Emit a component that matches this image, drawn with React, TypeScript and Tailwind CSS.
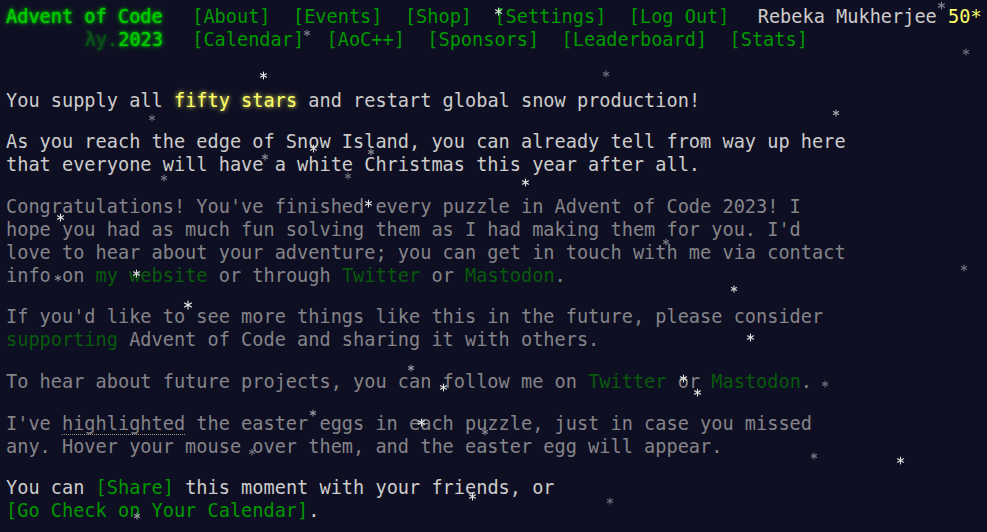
import React from "react";

type Star = [number, number, number, string];

const stars: Star[] = [
  [498, 11, 7, "#d8e8d8"],
  [307, 33, 6, "#7a7a86"],
  [263, 75, 7, "#e6e6e6"],
  [606, 74, 6, "#6e6e7a"],
  [941, 5, 7, "#8a8a94"],
  [966, 52, 6, "#6e6e7a"],
  [836, 113, 6, "#a8a8b0"],
  [152, 118, 6, "#6e6e7a"],
  [703, 142, 6, "#7a7a86"],
  [313, 148, 7, "#dcdcdc"],
  [371, 152, 6, "#8a8a94"],
  [265, 157, 6, "#8a8a94"],
  [348, 176, 6, "#6e6e7a"],
  [164, 178, 6, "#7a7a86"],
  [525, 182, 7, "#e6e6e6"],
  [368, 203, 7, "#e0e0e0"],
  [60, 217, 7, "#e6e6e6"],
  [58, 278, 6, "#8a8a94"],
  [136, 273, 7, "#e0e0e0"],
  [666, 242, 6, "#7a7a86"],
  [734, 289, 6, "#d0d0d0"],
  [964, 268, 6, "#6e6e7a"],
  [188, 305, 8, "#f2f2f2"],
  [750, 337, 7, "#e6e6e6"],
  [411, 368, 6, "#9a9aa4"],
  [443, 387, 7, "#e6e6e6"],
  [683, 378, 7, "#e6e6e6"],
  [697, 392, 7, "#e6e6e6"],
  [825, 384, 6, "#6e6e7a"],
  [313, 413, 6, "#9a9aa4"],
  [421, 422, 7, "#e6e6e6"],
  [485, 432, 6, "#8a8a94"],
  [252, 452, 6, "#6e6e7a"],
  [814, 456, 6, "#7a7a86"],
  [900, 460, 7, "#dcdcdc"],
  [472, 496, 7, "#e6e6e6"],
  [610, 501, 6, "#6e6e7a"],
  [137, 516, 6, "#9a9aa4"],
];

function Snow({ x, y, s, c }: { x: number; y: number; s: number; c: string }) {
  const r = s / 2;
  const dx = r * Math.cos(Math.PI / 6);
  const dy = r * Math.sin(Math.PI / 6);
  return (
    <svg
      className="absolute pointer-events-none"
      style={{ left: x - r - 1, top: y - r - 1 }}
      width={s + 2}
      height={s + 2}
      viewBox={`${-r - 1} ${-r - 1} ${s + 2} ${s + 2}`}
    >
      <g stroke={c} strokeWidth={1.1} strokeLinecap="round">
        <line x1={0} y1={-r} x2={0} y2={r} />
        <line x1={-dx} y1={-dy} x2={dx} y2={dy} />
        <line x1={-dx} y1={dy} x2={dx} y2={-dy} />
      </g>
    </svg>
  );
}

const navTop = ["[About]", "[Events]", "[Shop]", "[Settings]", "[Log Out]"];
const navBottom = ["[Calendar]", "[AoC++]", "[Sponsors]", "[Leaderboard]", "[Stats]"];

export default function App() {
  return (
    <div className="relative min-h-screen w-full overflow-hidden bg-[#0f0f23] text-[#cccccc] font-['DejaVu_Sans_Mono',monospace] text-[18.6px] leading-[23px]">
      <header className="pl-[6px] pt-[5px]">
        <div className="flex items-baseline whitespace-pre">
          <h1 className="w-[157px] shrink-0 text-[#00cc00] font-normal [text-shadow:0_0_2px_#00cc00,0_0_5px_#00cc00]">
            Advent of Code
          </h1>
          <ul className="ml-[18px] flex">
            {navTop.map((n) => (
              <li key={n} className="px-[11.2px] text-[#009900]">
                {n}
              </li>
            ))}
          </ul>
          <span className="ml-[17px] text-[#cccccc]">Rebeka Mukherjee</span>
          <span className="ml-[11.2px] text-[#ffff66]">50*</span>
        </div>
        <div className="flex items-baseline whitespace-pre">
          <h1 className="w-[157px] shrink-0 text-right text-[#00cc00] font-normal [text-shadow:0_0_2px_#00cc00,0_0_5px_#00cc00]">
            <span className="opacity-35">λy.</span>
            <span>2023</span>
          </h1>
          <ul className="ml-[18px] flex">
            {navBottom.map((n) => (
              <li key={n} className="px-[11.2px] text-[#009900]">
                {n}
              </li>
            ))}
          </ul>
        </div>
      </header>

      <main className="mt-[37.6px] pl-[6px]">
        <article className="w-[75.5ch]">
          <p className="mb-[18.6px]">
            You supply all{" "}
            <span className="text-[#ffff66] [text-shadow:0_0_5px_#ffff66]">fifty stars</span> and
            restart global snow production!
          </p>
          <p className="mb-[18.6px]">
            As you reach the edge of Snow Island, you can already tell from way up here that
            everyone will have a white Christmas this year after all.
          </p>
          <p className="mb-[18.6px] text-[#848489]">
            Congratulations! You've finished every puzzle in Advent of Code 2023! I hope you had
            as much fun solving them as I had making them for you. I'd love to hear about your
            adventure; you can get in touch with me via contact info on{" "}
            <span className="text-[#075a0c]">my website</span> or through{" "}
            <span className="text-[#075a0c]">Twitter</span> or{" "}
            <span className="text-[#075a0c]">Mastodon</span>.
          </p>
          <p className="mb-[18.6px] text-[#848489]">
            If you'd like to see more things like this in the future, please consider{" "}
            <span className="text-[#075a0c]">supporting</span> Advent of Code and sharing it with
            others.
          </p>
          <p className="mb-[18.6px] text-[#848489]">
            To hear about future projects, you can follow me on{" "}
            <span className="text-[#075a0c]">Twitter</span> or{" "}
            <span className="text-[#075a0c]">Mastodon</span>.
          </p>
          <p className="mb-[18.6px] text-[#848489]">
            I've{" "}
            <span className="border-b border-dotted border-[#9a9a70]">highlighted</span> the
            easter eggs in each puzzle, just in case you missed any. Hover your mouse over them,
            and the easter egg will appear.
          </p>
          <p className="mb-[18.6px]">
            You can <span className="whitespace-nowrap text-[#009900]">[Share]</span> this moment
            with your friends, or{" "}
            <span className="whitespace-nowrap text-[#009900]">[Go Check on Your Calendar]</span>.
          </p>
        </article>
      </main>

      {stars.map(([x, y, s, c], i) => (
        <Snow key={i} x={x} y={y} s={s} c={c} />
      ))}
    </div>
  );
}
